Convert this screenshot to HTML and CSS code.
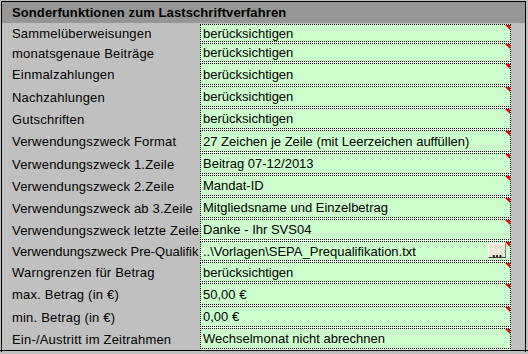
FILE: index.html
```html
<!DOCTYPE html>
<html lang="de">
<head>
    <meta charset="UTF-8">
    <title>Sonderfunktionen zum Lastschriftverfahren</title>
    <link rel="stylesheet" href="styles.css">
</head>
<body>
    <div class="panel">
        <div class="title">Sonderfunktionen zum Lastschriftverfahren</div>
        <div class="grid">
            <div class="label">Sammelüberweisungen</div>
            <div class="cell">berücksichtigen</div>
            <div class="label">monatsgenaue Beiträge</div>
            <div class="cell">berücksichtigen</div>
            <div class="label">Einmalzahlungen</div>
            <div class="cell">berücksichtigen</div>
            <div class="label">Nachzahlungen</div>
            <div class="cell">berücksichtigen</div>
            <div class="label">Gutschriften</div>
            <div class="cell">berücksichtigen</div>
            <div class="label">Verwendungszweck Format</div>
            <div class="cell">27 Zeichen je Zeile (mit Leerzeichen auffüllen)</div>
            <div class="label">Verwendungszweck 1.Zeile</div>
            <div class="cell">Beitrag 07-12/2013</div>
            <div class="label">Verwendungszweck 2.Zeile</div>
            <div class="cell">Mandat-ID</div>
            <div class="label">Verwendungszweck ab 3.Zeile</div>
            <div class="cell">Mitgliedsname und Einzelbetrag</div>
            <div class="label">Verwendungszweck letzte Zeile</div>
            <div class="cell">Danke - Ihr SVS04</div>
            <div class="label label-tight">Verwendungszweck Pre-Qualifik</div>
            <div class="cell">..\Vorlagen\SEPA_Prequalifikation.txt<button class="browse" type="button">...</button></div>
            <div class="label">Warngrenzen für Betrag</div>
            <div class="cell">berücksichtigen</div>
            <div class="label">max. Betrag (in €)</div>
            <div class="cell">50,00 €</div>
            <div class="label">min. Betrag (in €)</div>
            <div class="cell">0,00 €</div>
            <div class="label">Ein-/Austritt im Zeitrahmen</div>
            <div class="cell">Wechselmonat nicht abrechnen</div>
        </div>
    </div>
</body>
</html>
```

FILE: styles.css
```css
body {
    margin: 0;
    background-color: #c0c0c0;
    font-family: "Liberation Sans", Arial, sans-serif;
    font-size: 13px;
    color: #000;
}
.panel {
    width: 525px;
    height: 351px;
    margin: 1px 0 0 1px;
    border: 1px solid #000;
    border-bottom: none;
    box-sizing: border-box;
    background-color: #c0c0c0;
}
.panel::after {
    content: "";
    display: block;
    border-bottom: 1px solid #000;
    margin-left: -2px;
    width: 528px;
}
.title {
    height: 21px;
    line-height: 21px;
    padding-left: 10px;
    background-color: #969696;
    font-weight: bold;
    letter-spacing: 0.1px;
    margin-bottom: 1px;
}
.grid {
    display: grid;
    grid-template-columns: 198px 311px;
    grid-template-rows: 19px 20px 23px 22px 22px 23px 22px 22px 22px 22px 21px 21px 23px 22px 22px;
}
.label {
    display: flex;
    align-items: center;
    padding-left: 10px;
    white-space: nowrap;
    overflow: hidden;
    letter-spacing: 0.2px;
}
.label-tight {
    letter-spacing: 0;
}
.cell {
    position: relative;
    display: flex;
    align-items: center;
    padding-left: 2px;
    margin-bottom: 1px;
    border: 1px dotted #000;
    background-color: #ccffcc;
    box-shadow: 0 1px 0 #e6ffe6;
    white-space: nowrap;
}
.cell::after {
    content: "";
    position: absolute;
    top: 0;
    right: 0;
    border-top: 5px solid #ff0000;
    border-left: 5px solid transparent;
}
.browse {
    position: absolute;
    right: 4px;
    top: 1px;
    width: 18px;
    height: 15px;
    padding: 0;
    border: 1px solid;
    border-color: #fff #808080 #404040 #fff;
    background-color: #ece9d8;
    font-family: "Liberation Sans", Arial, sans-serif;
    font-size: 12px;
    font-weight: bold;
    line-height: 18px;
    color: #000;
}
```
